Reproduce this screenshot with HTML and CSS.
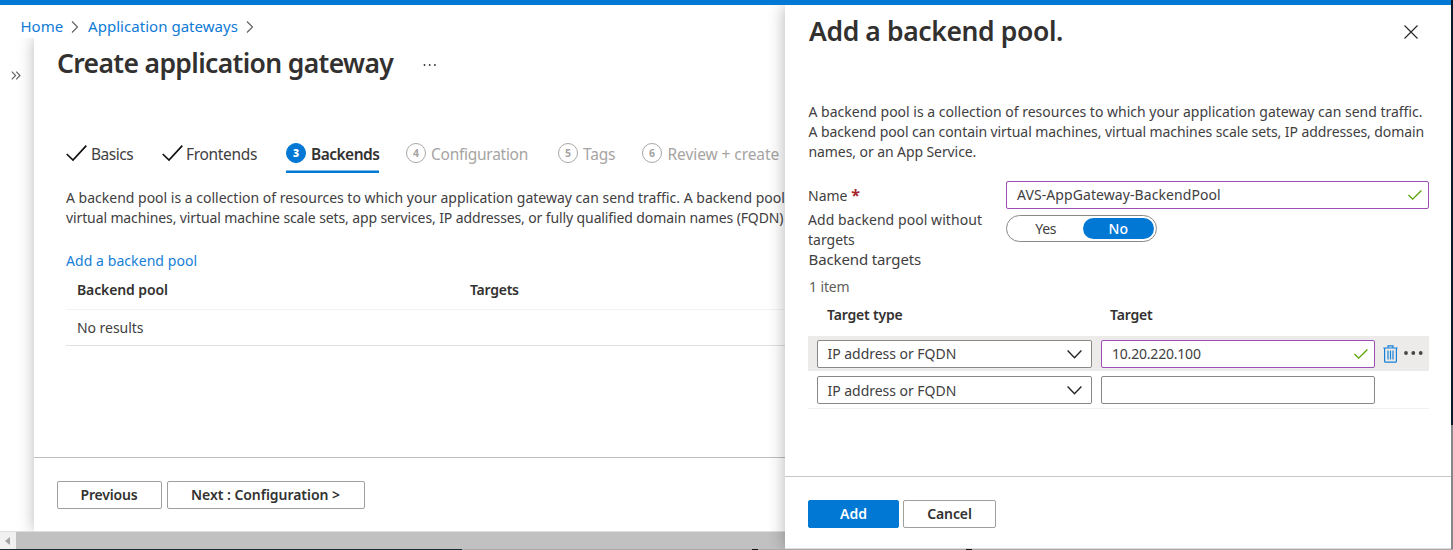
FILE: index.html
```
<!DOCTYPE html>
<html lang="en">
<head>
<meta charset="utf-8">
<title>Create application gateway</title>
<link rel="stylesheet" href="styles.css">
</head>
<body>
<div class="portal">
  <div class="topbar"></div>
  <div class="workspace">
    <div class="main">
      <nav class="breadcrumb">
        <a class="crumb-home">Home</a>
        <svg class="sep" width="8" height="12" viewBox="0 0 8 12"><path d="M1 .5 6.500 6 1 11.500"/></svg>
        <a class="crumb-app">Application gateways</a>
        <svg class="sep" width="8" height="12" viewBox="0 0 8 12"><path d="M1 .5 6.500 6 1 11.500"/></svg>
      </nav>
      <div class="content">
        <aside class="rail">
          <svg width="10" height="9" viewBox="0 0 10 9"><path d="M.8.700 4.600 4.500.8 8.300M5.200.700 9 4.500 5.200 8.300"/></svg>
        </aside>
        <section class="blade">
          <header class="blade-head">
            <h1 class="title">Create application gateway</h1>
            <svg class="more" width="14" height="4" viewBox="0 0 14 4"><circle cx="1.500" cy="2" r=".9"/><circle cx="6.700" cy="2" r=".9"/><circle cx="11.900" cy="2" r=".9"/></svg>
          </header>
          <div class="tabs">
            <div class="tab t1"><svg class="tick" width="21" height="16" viewBox="0 0 21 16"><path d="M.7 9 7 15 20.300.700"/></svg><span>Basics</span></div>
            <div class="tab t2"><svg class="tick" width="21" height="16" viewBox="0 0 21 16"><path d="M.7 9 7 15 20.300.700"/></svg><span>Frontends</span></div>
            <div class="tab t3 active"><b class="num">3</b><span>Backends</span></div>
            <div class="tab t4 off"><b class="num">4</b><span>Configuration</span></div>
            <div class="tab t5 off"><b class="num">5</b><span>Tags</span></div>
            <div class="tab t6 off"><b class="num">6</b><span>Review + create</span></div>
          </div>
          <p class="intro"><span class="i1">A backend pool is a collection of resources to which your application gateway can send traffic. A backend pool</span><br><span class="i2">virtual machines, virtual machine scale sets, app services, IP addresses, or fully qualified domain names (FQDN)</span></p>
          <a class="add-link">Add a backend pool</a>
          <div class="pools">
            <div class="pools-head"><span class="h-pool">Backend pool</span><span class="h-targets">Targets</span></div>
            <div class="pools-row"><span class="no-results">No results</span></div>
          </div>
          <footer class="blade-foot">
            <button class="btn prev"><span>Previous</span></button>
            <button class="btn next"><span>Next : Configuration &gt;</span></button>
          </footer>
        </section>
      </div>
      <div class="scrollbar"><div class="arrow"><svg width="5" height="8" viewBox="0 0 5 8"><path d="M5 0v8L0 4z"/></svg></div><div class="thumb"></div></div>
    </div>
    <section class="pane">
      <header class="pane-head">
        <h2 class="pane-title">Add a backend pool.</h2>
        <svg width="14" height="14" viewBox="0 0 14 14"><path d="M.5.5l13 13M13.500.5l-13 13"/></svg>
      </header>
      <p class="desc"><span class="d1">A backend pool is a collection of resources to which your application gateway can send traffic.</span><br><span class="d2">A backend pool can contain virtual machines, virtual machines scale sets, IP addresses, domain</span><br><span class="d3">names, or an App Service.</span></p>
      <div class="form">
        <label class="name-label"><span class="l-name">Name</span> <b class="req">*</b></label>
        <div class="field name-field"><span class="v-name">AVS-AppGateway-BackendPool</span><svg class="ok" width="14" height="10" viewBox="0 0 14 10"><path d="M.5 5 4.700 9.200 13.400.500"/></svg></div>
        <label class="toggle-label"><span class="l-add">Add backend pool without</span><br><span class="l-targets">targets</span></label>
        <div class="toggle"><span class="yes">Yes</span><span class="no">No</span></div>
      </div>
      <h3 class="sub"><span>Backend targets</span></h3>
      <div class="count"><span>1 item</span></div>
      <div class="grid-head"><span class="g-type">Target type</span><span class="g-target">Target</span></div>
      <div class="grid-row selected">
        <div class="field select"><span class="v-type">IP address or FQDN</span><svg width="15" height="9" viewBox="0 0 15 9"><path d="M.6.6 7.500 7.800 14.400.6"/></svg></div>
        <div class="field target valid"><span class="v-ip">10.20.220.100</span><svg class="ok" width="14" height="10" viewBox="0 0 14 10"><path d="M.5 5 4.700 9.200 13.400.500"/></svg></div>
        <svg class="trash" width="15" height="18" viewBox="0 0 15 18"><path d="M.3 3h14.400M5 3V.8h5V3M1.600 3v13.200q0 1 1 1h9.800q1 0 1-1V3M5 5.500v9M7.500 5.500v9M10 5.500v9"/></svg>
        <svg class="dots" width="19" height="4" viewBox="0 0 19 4"><circle cx="2" cy="2" r="1.900"/><circle cx="9.300" cy="2" r="1.900"/><circle cx="16.700" cy="2" r="1.900"/></svg>
      </div>
      <div class="grid-row second">
        <div class="field select"><span class="v-type">IP address or FQDN</span><svg width="15" height="9" viewBox="0 0 15 9"><path d="M.6.6 7.500 7.800 14.400.6"/></svg></div>
        <div class="field target"></div>
      </div>
      <footer class="pane-foot">
        <button class="btn add"><span>Add</span></button>
        <button class="btn cancel"><span>Cancel</span></button>
      </footer>
    </section>
    <div class="edge"></div>
  </div>
  <div class="baseline"><i class="dark"></i><i class="grey"></i><i class="spot"></i><i class="grey2"></i><i class="spot"></i><i class="grey3"></i></div>
</div>
</body>
</html>
```
FILE: styles.css
```
* { box-sizing: border-box; }
body {
  margin: 0;
  background: #fff;
  color: #41403f;
  font: 14px/20px "Noto Sans", "Open Sans", sans-serif;
}
h1, h2, h3, p { margin: 0; }
svg { display: block; flex: none; fill: none; stroke: #252423; stroke-width: 1.100; overflow: visible; }
span { white-space: nowrap; }
.portal { width: 1453px; height: 550px; overflow: hidden; display: flex; flex-direction: column; }
.topbar { height: 5px; width: 1451px; background: #0078d4; }
.workspace { height: 544px; display: flex; }
.main { width: 785px; display: flex; flex-direction: column; overflow: hidden; }

.breadcrumb { height: 33px; flex: none; padding: 1px 0 0 20.500px; display: flex; align-items: flex-start; line-height: 41px; font-size: 15px; color: #0f7bd6; }
.breadcrumb a { white-space: nowrap; height: 32px; }
.breadcrumb .sep { margin: 15px 0 0; stroke: #605e5c; }
.crumb-home { width: 50.500px; }
.crumb-app { width: 150px; margin-left: 9px; margin-right: 8px; letter-spacing: .04px; }

.content { display: flex; height: 493px; }
.rail { width: 34px; padding: 33px 0 0 11px; }
.rail svg { stroke: #605e5c; }
.blade { width: 751px; display: flex; flex-direction: column; box-shadow: 0 0 15px rgba(0, 0, 0, .28); clip-path: inset(0 0 0 -30px); background: #fff; }
.blade-head { display: flex; align-items: center; height: 50px; padding-left: 23px; }
.title { width: 366px; font-size: 26.500px; line-height: 50px; font-weight: 600; letter-spacing: -.640px; color: #323130; white-space: nowrap; }
.more { fill: #323130; stroke: none; margin-top: 3px; }

.tabs { display: flex; height: 45px; margin-top: 40px; padding-left: 32px; font-size: 15.500px; }
.tab { display: flex; flex: none; height: 45px; align-items: center; line-height: 20px; padding-top: 6px; }
.t1 { width: 96px; gap: 4px; letter-spacing: -.500px; }
.t2 { width: 124px; gap: 3px; letter-spacing: -.330px; }
.t3 { width: 93px; gap: 5px; margin-right: 27px; box-shadow: inset 0 -2.500px #0078d4; font-weight: 600; letter-spacing: -.520px; color: #323130; }
.t4 { width: 152px; gap: 5px; letter-spacing: -.270px; }
.t5 { width: 84px; gap: 5px; letter-spacing: -.200px; }
.t6 { gap: 5.500px; letter-spacing: -.080px; }
.tick { stroke: #111; stroke-width: 1.700; margin-bottom: 2px; }
.off { color: #a6a4a2; }
.num { width: 20px; height: 20px; margin-bottom: 2px; flex: none; border: 1px solid #aaa8a6; border-radius: 50%; font-size: 10.500px; line-height: 18px; text-align: center; letter-spacing: 0; }
.active .num { background: #0078d4; border-color: #0078d4; color: #fff; }

.intro { margin: 15px 0 0 32px; }
.i2 { letter-spacing: -.115px; }
.add-link { margin: 23px 0 0 32px; color: #1580d8; white-space: nowrap; letter-spacing: .070px; }
.pools { margin-left: 32px; }
.pools-head { height: 39px; display: flex; padding-left: 11px; line-height: 38px; border-bottom: 1px solid #f3f2f1; font-weight: 600; color: #323130; letter-spacing: -.120px; }
.h-pool { width: 393px; }
.h-targets { letter-spacing: -.250px; }
.pools-row { height: 36px; padding-left: 11px; line-height: 36px; border-bottom: 1px solid #e1e0df; letter-spacing: -.050px; }
.blade-foot { display: flex; gap: 5px; margin-top: auto; height: 74px; padding: 23px 0 0 22.500px; border-top: 1px solid #bdbdbd; }
.btn { height: 28px; padding: 0; display: flex; align-items: center; justify-content: center; border: 1px solid #a19f9d; border-radius: 2px; background: #fff; color: #323130; font: 600 14px/20px "Noto Sans", sans-serif; }
.prev { width: 105px; letter-spacing: -.200px; }
.next { width: 198px; letter-spacing: -.040px; }

.scrollbar { height: 18px; display: flex; border-top: 1px solid #dedede; background: #f1f1f1; }
.arrow { width: 16px; padding: 5px 0 0 5px; }
.arrow svg { fill: #a3a3a3; stroke: none; }
.thumb { flex: 1; background: #c1c1c1; }

.pane { position: relative; width: 666px; display: flex; flex-direction: column; background: #fff; box-shadow: 0 0 16px rgba(0, 0, 0, .3); clip-path: inset(0 0 0 -30px); border-bottom: 1px solid #dcdcdc; }
.pane-head { display: flex; justify-content: space-between; height: 54px; padding: 0 33px 0 24px; align-items: center; }
.pane-title { font-size: 26.500px; line-height: 52px; margin-bottom: 2px; font-weight: 600; letter-spacing: -.380px; color: #323130; white-space: nowrap; }
.desc { margin: 43px 0 0 23.500px; }
.d2, .d3 { letter-spacing: -.085px; }
.form { display: grid; grid-template-columns: 198px 423px; margin: 19px 0 0 23px; grid-template-rows: 28px 40px; }
.name-label { line-height: 30px; }
.req { color: #a4262c; font-size: 16px; line-height: 20px; }
.field { display: flex; align-items: center; justify-content: space-between; height: 28px; border: 1px solid #8a8886; border-radius: 2px; background: #fff; padding: 0 6px 0 10px; }
.field .ok { stroke: #57a300; stroke-width: 1.300; }
.name-field, .valid { border-color: #9b4fb5; }
.v-name { letter-spacing: .080px; }
.toggle-label { padding-top: 1px; }
.l-add { letter-spacing: .060px; }
.toggle { width: 151px; height: 27px; margin-top: 6px; border: 1px solid #8a8886; border-radius: 14px; padding: 2px; display: flex; line-height: 21px; text-align: center; }
.yes { width: 74px; letter-spacing: -.300px; }
.no { width: 72px; background: #0078d4; color: #fff; border-radius: 11px; font-weight: 500; }
.sub { margin-left: 23.500px; font-size: 15px; font-weight: 400; line-height: 20px; letter-spacing: -.120px; }
.count { margin: 8px 0 0 24px; color: #605e5c; letter-spacing: -.120px; }
.grid-head { display: flex; margin-left: 42px; height: 39px; line-height: 36px; font-weight: 600; color: #323130; letter-spacing: -.180px; }
.g-type { width: 283px; }
.grid-row { display: flex; margin-left: 23px; width: 621px; height: 35px; padding: 4px 0 0 9px; gap: 9px; }
.selected { background: #edebe9; }
.second { height: 38px; padding-top: 5px; border-bottom: 1px solid #f3f2f1; }
.second .v-type { padding-top: 2px; }
.select { width: 275px; padding: 0 9px 0 9.500px; letter-spacing: -.030px; }
.select svg { stroke-width: 1.400; }
.second .select svg { margin-top: 1px; }
.target { width: 274px; letter-spacing: -.200px; }
.trash { stroke: #1580d8; stroke-width: 1.200; margin: 5px 0 0 -1px; }
.dots { fill: #484644; stroke: none; margin: 11px 0 0 -3px; }
.pane-foot { display: flex; gap: 4px; margin-top: auto; height: 72px; border-top: 1px solid #c8c6c4; padding: 23px 0 0 23px; }
.add { width: 91px; border-color: #0078d4; background: #0078d4; color: #fff; }
.cancel { width: 93px; letter-spacing: -.100px; }

.edge { width: 2px; margin-top: -5px; height: 549px; background: linear-gradient(#07192b 0 425px, #858687 425px); }
.baseline { display: flex; height: 1px; }
.dark { width: 462px; background: #1d2b32; }
.grey { width: 290px; background: #aaa; }
.spot { width: 6px; background: #111; }
.grey2 { width: 208px; background: #aaa; }
.grey3 { flex: 1; background: #aaa; }
```
